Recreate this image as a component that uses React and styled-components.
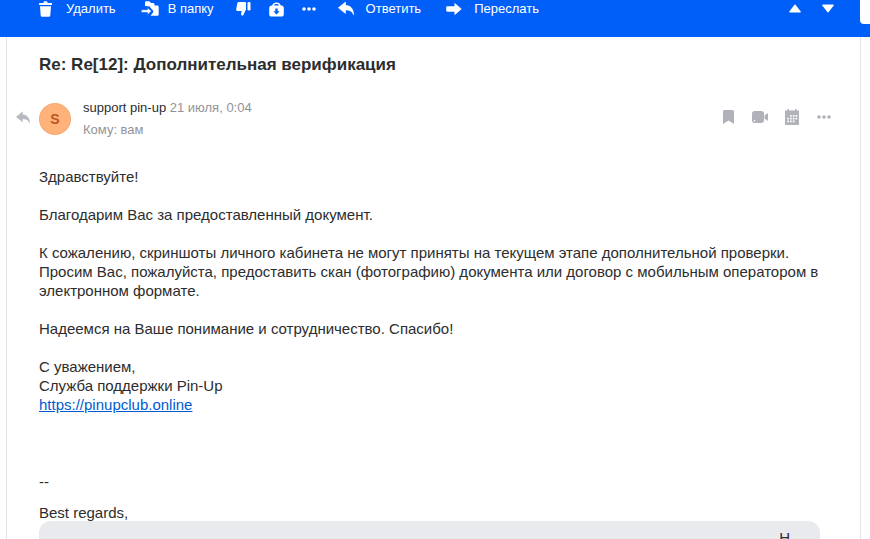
import React from "react";
import styled, { createGlobalStyle } from "styled-components";

const Global = createGlobalStyle`
  html, body { margin: 0; padding: 0; background: #fff; }
  body { font-family: "Liberation Sans", Arial, sans-serif; width: 870px; height: 539px; overflow: hidden; }
`;
const Page = styled.div`
  width: 870px; height: 539px; overflow: hidden; display: flex; flex-direction: column; background: #fff;
`;
const Toolbar = styled.div`
  position: relative; flex: none; height: 37px; background: #005ff9; display: flex; align-items: flex-start;
  padding: 1px 0 0 39px; box-sizing: border-box; color: #fff; font-size: 13px;
`;
const Notch = styled.div`
  position: absolute; right: 0; top: 0; width: 10px; height: 24px; background: #fff; border-bottom-left-radius: 4px;
`;
const Action = styled.div`
  display: flex; align-items: center; height: 15px; margin-left: ${p => p.$ml || 0}px; gap: ${p => p.$gap || 0}px; white-space: nowrap;
  svg { display: block; flex: none; }
`;
const Panel = styled.div`
  flex: 1; margin: 0 9px 0 6px; border-left: 1px solid #e3e4ea; border-right: 1px solid #e3e4ea; padding: 0 29px 0 32px; min-height: 0; overflow: hidden;
`;
const Subject = styled.h1`
  margin: 18px 0 0; font-size: 17px; line-height: 20px; font-weight: 700; color: #2c2d2e;
`;
const Header = styled.div`
  display: flex; align-items: flex-start; margin-top: 26px; height: 36px; position: relative;
`;
const ReplyMark = styled.div`
  position: absolute; left: -23px; top: 10px; color: #b7b9c0;
  svg { display: block; }
`;
const Avatar = styled.div`
  flex: none; width: 32px; height: 32px; border-radius: 50%; background: #ffb27a; color: #b9591c; font-weight: 700; font-size: 14px;
  display: flex; align-items: center; justify-content: center; margin: 2px 12px 0 0; box-shadow: inset 0 0 0 1px rgba(0,0,0,.04);
`;
const Meta = styled.div`
  flex: 1; font-size: 13px; line-height: 16px; margin-top: -1px;
`;
const From = styled.div`
  color: #2c2d2e;
  span { color: #919399; }
`;
const To = styled.div`
  color: #919399; margin-top: 6px;
`;
const Tools = styled.div`
  display: flex; align-items: center; color: #b0b2b9; margin: 8px 0 0 0;
  svg { display: block; }
`;
const Tool = styled.div`
  margin-left: ${p => p.$ml || 0}px;
`;
const Body = styled.div`
  margin-top: 30.4px; font-size: 15px; line-height: 19px; color: #2c2d2e; width: 800px;
  p { margin: 0; white-space: nowrap; }
  a { color: #005bd1; }
`;
const Gap = styled.div`
  height: ${p => p.$h}px;
`;
const Quote = styled.div`
  margin-top: -1px; width: 781px; height: 60px; background: #e9eaee; border-radius: 12px 12px 0 0;
  padding: 9px 30px 0 0; box-sizing: border-box; text-align: right; font-size: 15px; color: #2c2d2e; line-height: 16px;
`;

const I = ({ w = 16, h = 16, vb, children }) => (
  <svg width={w} height={h} viewBox={vb || `0 0 ${w} ${h}`} fill="currentColor">{children}</svg>
);
const Trash = () => <I w={13} h={16}><path d="M4.500 1.600C4.500.7 5.200.2 6 .2h1c.8 0 1.500.5 1.500 1.400V2H12c.6 0 1 .4 1 1v1H0V3c0-.6.4-1 1-1h3.500z"/><path d="M1 5.200h11l-.7 9c-.1 1-.8 1.600-1.700 1.600H3.400c-.9 0-1.600-.6-1.700-1.600z"/></I>;
const FolderMove = () => <I w={18} h={16}><path d="M4 1.500c0-.8.6-1.300 1.300-1.300h2.500c.5 0 .9.200 1.200.6l1 1.200h2c.8 0 1.500.6 1.500 1.500v1h2.700c.9 0 1.500.7 1.500 1.500v7.200c0 .9-.6 1.600-1.500 1.600H9.500l2.500-3.300c.5-.7.5-1.300 0-2L9 6.300V5.500L4 5z"/><path d="M6.500 6.800 10.500 10l-4 3.800v-2.300H.3V8.800h6.200z" stroke="#005ff9" strokeWidth=".6"/></I>;
const Thumb = () => <I w={15} h={16}><path d="M3 1h6c.6 0 1 .4 1 1v6.500L7.300 14c-.3.6-.8.800-1.300.6-.7-.2-1-.8-.9-1.500l.5-3H1.600C.6 10.100 0 9.200.2 8.300l1.100-6C1.500 1.500 2.200 1 3 1z"/><rect x="11.500" y="1" width="3" height="8.500" rx="1.300"/></I>;
const Archive = () => <I w={15} h={16}><path fillRule="evenodd" d="M7.500 1.600c-2.200 0-3.700 1.100-4.300 2.900H2.600C1.200 4.500.2 5.500.2 6.900v6.300c0 1.400 1 2.400 2.400 2.400h9.800c1.400 0 2.400-1 2.400-2.400V6.900c0-1.400-1-2.400-2.400-2.400h-.6c-.6-1.800-2.100-2.900-4.300-2.900zM5 4.500c.5-.9 1.400-1.400 2.500-1.400s2 .5 2.500 1.400zM6.300 7.600v2.600H4.300l3.200 3.200 3.200-3.200h-2V7.600z"/></I>;
const Dots = () => <I w={14} h={4}><circle cx="2" cy="2" r="1.800"/><circle cx="7" cy="2" r="1.800"/><circle cx="12" cy="2" r="1.800"/></I>;
const Reply = ({ w = 16, h = 15 }) => <I w={w} h={h} vb="0 0 16 15"><path d="M7.500 1v3.300c5 .3 8 3.300 8.200 9.700-1.200-3.500-3.500-5-8.200-5v3.500L.3 6.800z" strokeLinejoin="round" stroke="currentColor" strokeWidth=".6"/></I>;
const Forward = () => <I w={16} h={14}><path d="M8.500.8 15.700 7l-7.200 6.200V9.700H1.300C.6 9.700.2 9.200.2 8.500V5.500c0-.7.4-1.200 1.100-1.200h7.200z"/></I>;
const Up = () => <I w={12} h={9}><path d="M6 .5c.3 0 .5.100.7.400l5 6.500c.4.500 0 1.100-.6 1.100H.9c-.6 0-1-.6-.6-1.100l5-6.500C5.500.6 5.700.5 6 .5z"/></I>;
const Down = () => <I w={12} h={9}><path d="M6 8.500c.3 0 .5-.1.700-.4l5-6.500c.4-.5 0-1.100-.6-1.100H.9C.3.500-.1 1.100.3 1.600l5 6.500c.2.300.4.400.7.400z"/></I>;
const Bookmark = () => <I w={11} h={14}><path d="M1.500 0h8C10.300 0 11 .7 11 1.500V14L5.500 10.500 0 14V1.500C0 .7.700 0 1.500 0z"/></I>;
const Video = () => <I w={16} h={12}><path fillRule="evenodd" d="M2.500 0h7C10.900 0 12 1.100 12 2.500v7C12 10.900 10.900 12 9.500 12h-7C1.100 12 0 10.900 0 9.500v-7C0 1.100 1.100 0 2.500 0zM2.500 9a.8.800 0 1 0 0 1.600.8.800 0 0 0 0-1.600z"/><path d="M12.500 4.500 15 2.500c.4-.3 1-.1 1 .5v6c0 .6-.6.800-1 .5L12.500 7.500z"/></I>;
const Calendar = () => <I w={14} h={16}><path fillRule="evenodd" d="M2.500 0h1.500v1.500h6V0h1.500v1.500H13c.6 0 1 .4 1 1V15c0 .6-.4 1-1 1H1c-.6 0-1-.4-1-1V2.500c0-.6.4-1 1-1h1.500zM5 6v1.700h1.700V6zM7.800 6v1.700h1.700V6zM10.600 6v1.700h1.700V6zM5 8.800v1.700h1.700V8.800zM7.800 8.800v1.700h1.700V8.800zM10.600 8.800v1.700h1.700V8.800zM2.200 8.800v1.700h1.700V8.800zM2.200 11.600v1.700h1.700v-1.700zM5 11.600v1.700h1.700v-1.700zM7.800 11.600v1.700h1.700v-1.700z"/></I>;

export default function App() {
  return (
    <Page>
      <Global />
      <Toolbar>
        <Action $gap={14}><Trash />Удалить</Action>
        <Action $ml={25} $gap={9}><FolderMove />В папку</Action>
        <Action $ml={22}><Thumb /></Action>
        <Action $ml={18}><Archive /></Action>
        <Action $ml={18}><Dots /></Action>
        <Action $ml={22} $gap={12}><Reply />Ответить</Action>
        <Action $ml={25} $gap={12}><Forward />Переслать</Action>
        <Action $ml={250}><Up /></Action>
        <Action $ml={21}><Down /></Action>
        <Notch />
      </Toolbar>
      <Panel>
        <Subject>Re: Re[12]: Дополнительная верификация</Subject>
        <Header>
          <ReplyMark><Reply w={14} h={13} /></ReplyMark>
          <Avatar>S</Avatar>
          <Meta>
            <From>support pin-up <span>21 июля, 0:04</span></From>
            <To>Кому: вам</To>
          </Meta>
          <Tools>
            <Tool><Bookmark /></Tool>
            <Tool $ml={18}><Video /></Tool>
            <Tool $ml={17}><Calendar /></Tool>
            <Tool $ml={18}><Dots /></Tool>
          </Tools>
        </Header>
        <Body>
          <p>Здравствуйте!</p>
          <p><br /></p>
          <p>Благодарим Вас за предоставленный документ.</p>
          <p><br /></p>
          <p>К сожалению, скриншоты личного кабинета не могут приняты на текущем этапе дополнительной проверки.</p>
          <p>Просим Вас, пожалуйста, предоставить скан (фотографию) документа или договор с мобильным оператором в</p>
          <p>электронном формате.</p>
          <p><br /></p>
          <p>Надеемся на Ваше понимание и сотрудничество. Спасибо!</p>
          <p><br /></p>
          <p>С уважением,</p>
          <p>Служба поддержки Pin-Up</p>
          <p><a href="#">https://pinupclub.online</a></p>
          <Gap $h={58} />
          <p>--</p>
          <Gap $h={12} />
          <p>Best regards,</p>
        </Body>
        <Quote>Н</Quote>
      </Panel>
    </Page>
  );
}
